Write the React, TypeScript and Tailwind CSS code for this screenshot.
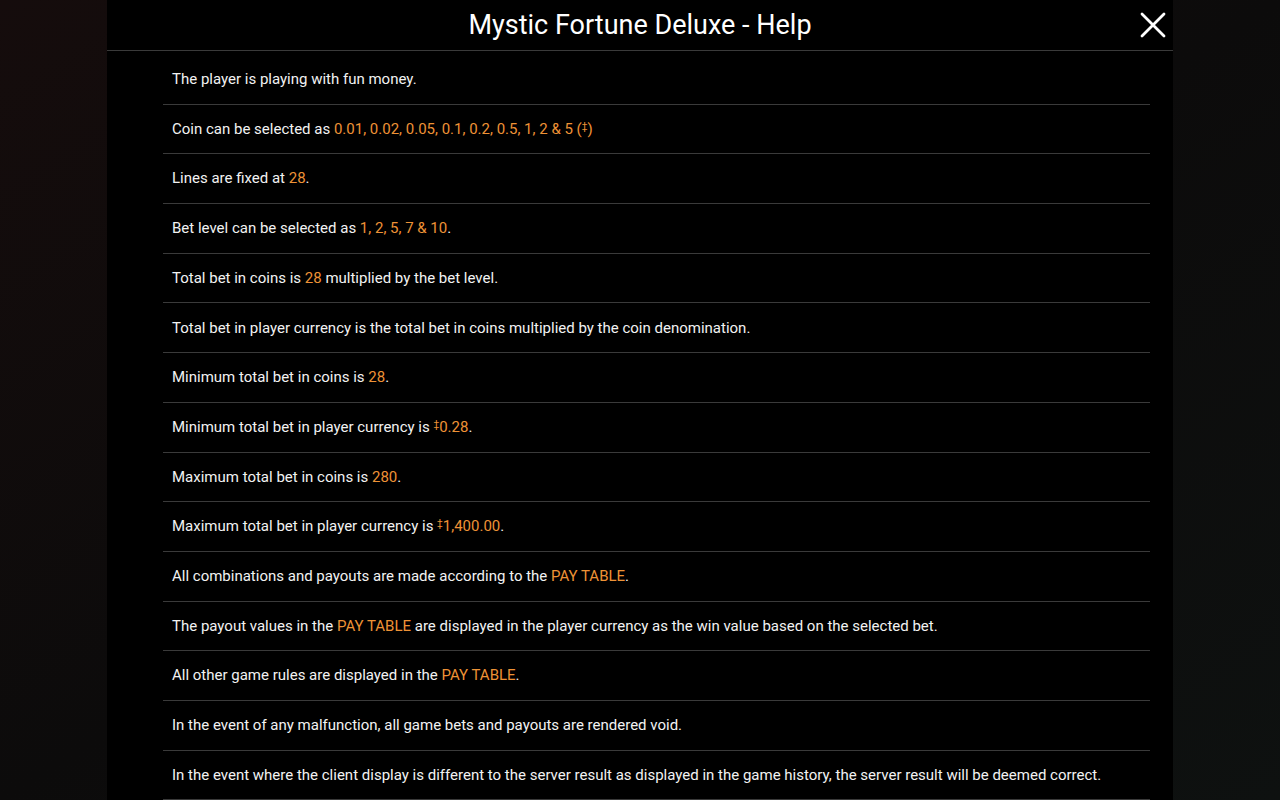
type Part = string | { hl: string };

const rows: Part[][] = [
    ['The player is playing with fun money.'],
    ['Coin can be selected as ', { hl: '0.01, 0.02, 0.05, 0.1, 0.2, 0.5, 1, 2 & 5 (‡)' }],
    ['Lines are fixed at ', { hl: '28' }, '.'],
    ['Bet level can be selected as ', { hl: '1, 2, 5, 7 & 10' }, '.'],
    ['Total bet in coins is ', { hl: '28' }, ' multiplied by the bet level.'],
    ['Total bet in player currency is the total bet in coins multiplied by the coin denomination.'],
    ['Minimum total bet in coins is ', { hl: '28' }, '.'],
    ['Minimum total bet in player currency is ', { hl: '‡0.28' }, '.'],
    ['Maximum total bet in coins is ', { hl: '280' }, '.'],
    ['Maximum total bet in player currency is ', { hl: '‡1,400.00' }, '.'],
    ['All combinations and payouts are made according to the ', { hl: 'PAY TABLE' }, '.'],
    ['The payout values in the ', { hl: 'PAY TABLE' }, ' are displayed in the player currency as the win value based on the selected bet.'],
    ['All other game rules are displayed in the ', { hl: 'PAY TABLE' }, '.'],
    ['In the event of any malfunction, all game bets and payouts are rendered void.'],
    ['In the event where the client display is different to the server result as displayed in the game history, the server result will be deemed correct.'],
];

const Highlight = ({ text }: { text: string }) => {
    // currency sign is drawn small and raised
    const pieces = text.split('‡');
    return (
        <span className="text-[#ee9236]">
            {pieces.map((p, i) => (
                <span key={i}>
                    {i > 0 && <span className="relative -top-[4px] text-[10px]">‡</span>}
                    {p}
                </span>
            ))}
        </span>
    );
};

const App = () => {
    return (
        <div
            className="h-screen w-full overflow-hidden bg-linear-to-br from-[#150c0c] via-[#0c0b0b] to-[#0e1110]"
            style={{ fontFamily: 'Roboto, "Noto Sans", sans-serif' }}
        >
            <div className="mx-auto flex h-full w-[1066px] flex-col bg-black">
                <div className="relative flex h-[51px] shrink-0 items-center justify-center border-b border-[#3a3a3a]">
                    <h1 className="text-[27px] leading-none text-white">Mystic Fortune Deluxe - Help</h1>
                    <button className="absolute right-[7px] top-[12px] text-white">
                        <svg width="26" height="26" viewBox="0 0 26 26" fill="none" stroke="currentColor" strokeWidth="2.8" strokeLinecap="round">
                            <path d="M2 2L24 24M24 2L2 24" />
                        </svg>
                    </button>
                </div>
                <div className="pl-[56px] pr-[23px] pt-[4px]">
                    {rows.map((r, i) => (
                        <div
                            key={i}
                            className="flex h-[49.7px] items-center border-b border-[#3a3a3a] px-[9px] text-[15px] text-[#f2f2f2]"
                        >
                            <p className="whitespace-nowrap">
                                {r.map((part, j) =>
                                    typeof part === 'string' ? (
                                        <span key={j}>{part}</span>
                                    ) : (
                                        <Highlight key={j} text={part.hl} />
                                    ),
                                )}
                            </p>
                        </div>
                    ))}
                </div>
            </div>
        </div>
    );
};

export default App;
